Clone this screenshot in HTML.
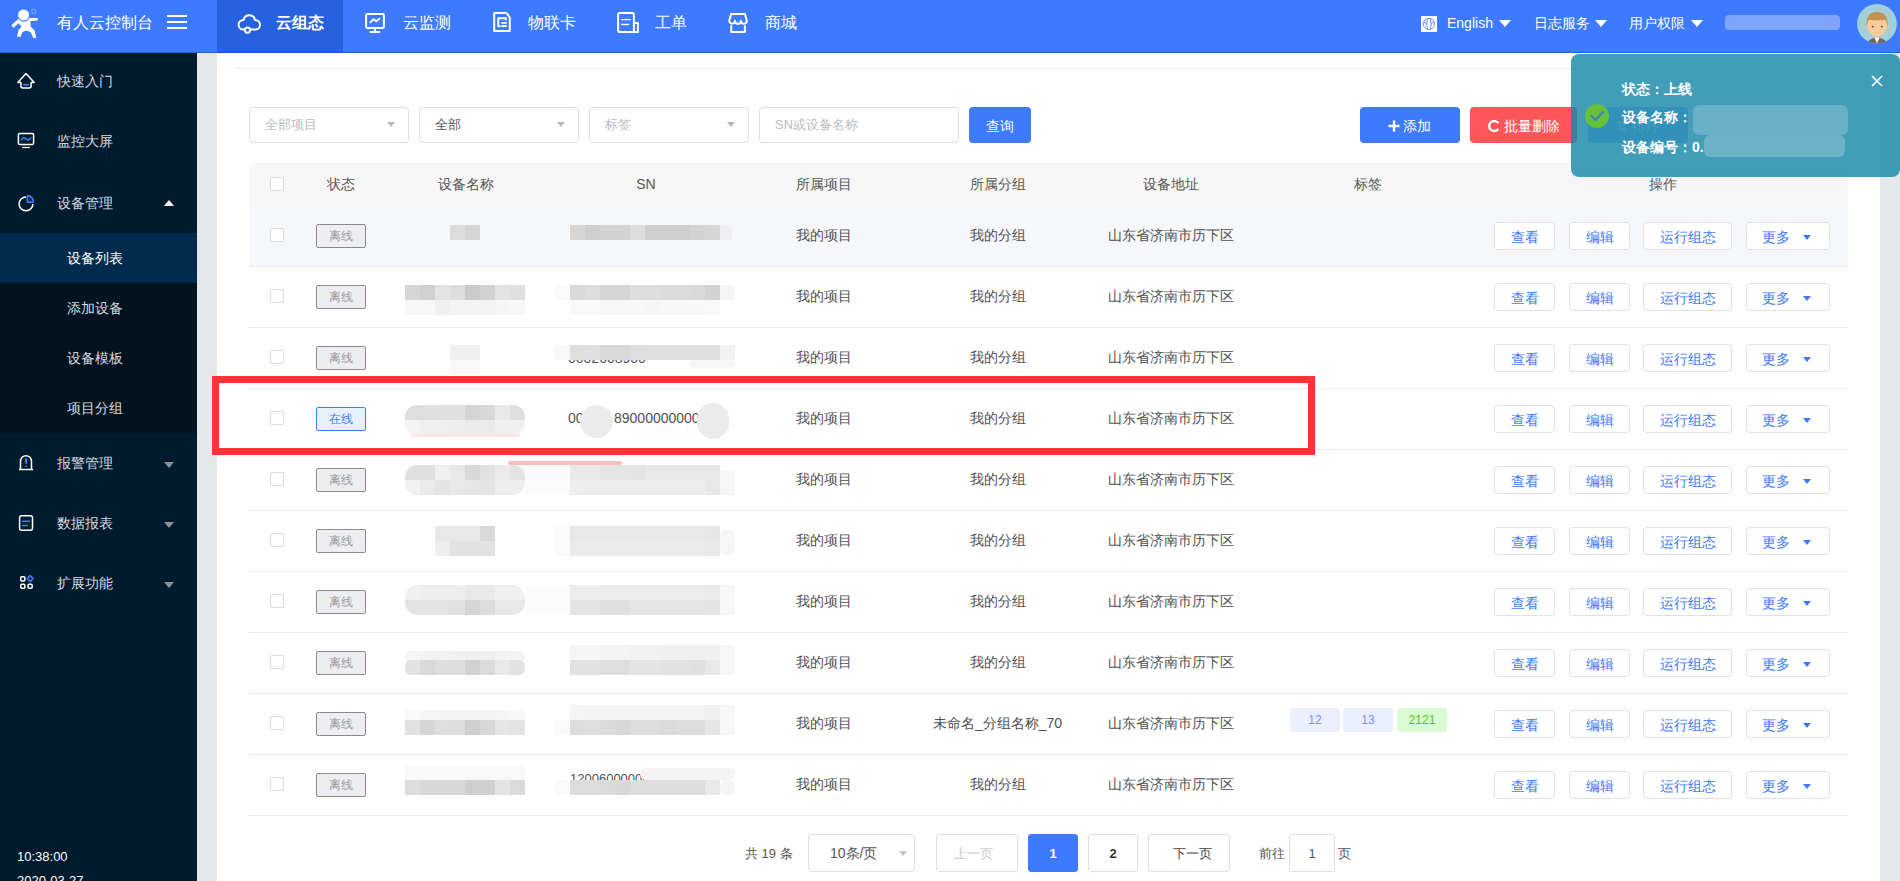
<!DOCTYPE html><html><head><meta charset="utf-8"><style>*{box-sizing:border-box;margin:0;padding:0}
html,body{width:1900px;height:881px;overflow:hidden;background:#fff;font-family:"Liberation Sans",sans-serif;color:#333}
.a{position:absolute}
#main{left:217px;top:52px;width:1663px;height:829px;background:#fff}
#hdr{left:0;top:0;width:1900px;height:52px;background:#3d7afd}
#side{left:0;top:53px;width:197px;height:828px;background:#001a2e}
#strip{left:197px;top:53px;width:20px;height:828px;background:#e6e7ea}
#rstrip{left:1880px;top:52px;width:20px;height:829px;background:#e6e7ea}
.nt{color:#fff;font-size:16px;line-height:20px;white-space:nowrap}
.rt{color:#fff;font-size:14px;line-height:18px;white-space:nowrap}
.si{color:#d5dae0;font-size:14px;line-height:18px;white-space:nowrap}
.th{font-size:14px;color:#555;line-height:18px;white-space:nowrap;text-align:center}
.td{font-size:14px;color:#505050;line-height:18px;white-space:nowrap;text-align:center}
.sel{border:1px solid #dcdfe6;border-radius:4px;height:36px;background:#fff}
.sel span{position:absolute;left:15px;top:8px;font-size:13px;line-height:17px;white-space:nowrap}
.caret{position:absolute;width:0;height:0;border-left:4px solid transparent;border-right:4px solid transparent;border-top:5px solid #b0b3b8}
.btn{border-radius:4px;color:#fff;font-size:14px;line-height:38px;text-align:center;height:36px;font-weight:500;white-space:nowrap}
.cb{width:14px;height:14px;border:1px solid #d8dbe0;border-radius:2px;background:#fff}
.st{width:50px;height:24px;border:1px solid #8a8a8a;background:#eceef2;color:#999;font-size:12px;line-height:23px;text-align:center;border-radius:2px}
.ob{height:28px;border:1px solid #e0e1e5;border-radius:4px;background:#fff;color:#3d7afd;font-size:14px;line-height:28px;text-align:center;white-space:nowrap}
.pg{top:834px;height:38px;border:1px solid #dcdfe6;border-radius:3px;background:#fff;font-size:13px;line-height:37px;text-align:center;white-space:nowrap}
</style></head><body>
<div class="a" id="main"></div>
<div id="strip" class="a"></div><div id="rstrip" class="a"></div>
<div class="a" style="left:237px;top:68px;width:1643px;height:1px;background:#e9ebef"></div>
<div class="a sel" style="left:249px;top:107px;width:160px"><span style="color:#b9bcc2">全部项目</span><i class="caret" style="left:137px;top:14px;border-top-color:#b4b8c0"></i></div>
<div class="a sel" style="left:419px;top:107px;width:160px"><span style="color:#555">全部</span><i class="caret" style="left:137px;top:14px;border-top-color:#b4b8c0"></i></div>
<div class="a sel" style="left:589px;top:107px;width:160px"><span style="color:#b9bcc2">标签</span><i class="caret" style="left:137px;top:14px;border-top-color:#b4b8c0"></i></div>
<div class="a sel" style="left:759px;top:107px;width:200px"><span style="color:#b9bcc2">SN或设备名称</span></div>
<div class="a btn" style="left:969px;top:107px;width:62px;background:#3d7afd">查询</div>
<div class="a btn" style="left:1360px;top:107px;width:100px;background:#3d7afd;padding-left:14px"><svg style="position:absolute;left:28px;top:13px" width="12" height="12" viewBox="0 0 12 12"><path d="M6 0.5V11.5M0.5 6H11.5" stroke="#fff" stroke-width="2.4"/></svg>添加</div>
<div class="a btn" style="left:1470px;top:107px;width:107px;background:#fe5558;padding-left:16px"><svg style="position:absolute;left:18px;top:13px" width="12" height="12" viewBox="0 0 12 12"><path d="M10.3 3.2 A5 5 0 1 0 10.3 8.8" fill="none" stroke="#fff" stroke-width="2.3"/></svg>批量删除</div>
<div class="a btn" style="left:1588px;top:107px;width:100px;background:#a4beff">⇅ 排序</div>
<div class="a" style="left:249px;top:163px;width:1599px;height:43px;background:#f6f6f6;border-radius:6px 6px 0 0"></div>
<div class="a cb" style="left:270px;top:177px"></div>
<div class="a th" style="left:305px;top:175px;width:72px">状态</div>
<div class="a th" style="left:377px;top:175px;width:178px">设备名称</div>
<div class="a th" style="left:555px;top:175px;width:182px">SN</div>
<div class="a th" style="left:737px;top:175px;width:174px">所属项目</div>
<div class="a th" style="left:911px;top:175px;width:173px">所属分组</div>
<div class="a th" style="left:1084px;top:175px;width:174px">设备地址</div>
<div class="a th" style="left:1258px;top:175px;width:220px">标签</div>
<div class="a th" style="left:1478px;top:175px;width:370px">操作</div>
<div class="a" style="left:249px;top:206px;width:1599px;height:60px;background:#f5f7fa"></div>
<div class="a" style="left:249px;top:266px;width:1599px;height:1px;background:#e8eaf0"></div>
<div class="a cb" style="left:270px;top:228px"></div>
<div class="a st" style="left:316px;top:224px">离线</div>
<div class="a td" style="left:737px;top:226px;width:174px">我的项目</div>
<div class="a td" style="left:911px;top:226px;width:173px">我的分组</div>
<div class="a td" style="left:1084px;top:226px;width:174px">山东省济南市历下区</div>
<div class="a ob" style="left:1494px;top:222px;width:61px">查看</div>
<div class="a ob" style="left:1569px;top:222px;width:61px">编辑</div>
<div class="a ob" style="left:1643px;top:222px;width:89px">运行组态</div>
<div class="a ob" style="left:1746px;top:222px;width:84px;text-align:left;padding-left:15px">更多<i class="caret" style="left:56px;top:12px;border-top-color:#3d7afd;border-left-width:4.2px;border-right-width:4.2px;border-top-width:5px"></i></div>
<div class="a" style="left:249px;top:267px;width:1599px;height:60px;background:#fff"></div>
<div class="a" style="left:249px;top:327px;width:1599px;height:1px;background:#e8eaf0"></div>
<div class="a cb" style="left:270px;top:289px"></div>
<div class="a st" style="left:316px;top:285px">离线</div>
<div class="a td" style="left:737px;top:287px;width:174px">我的项目</div>
<div class="a td" style="left:911px;top:287px;width:173px">我的分组</div>
<div class="a td" style="left:1084px;top:287px;width:174px">山东省济南市历下区</div>
<div class="a ob" style="left:1494px;top:283px;width:61px">查看</div>
<div class="a ob" style="left:1569px;top:283px;width:61px">编辑</div>
<div class="a ob" style="left:1643px;top:283px;width:89px">运行组态</div>
<div class="a ob" style="left:1746px;top:283px;width:84px;text-align:left;padding-left:15px">更多<i class="caret" style="left:56px;top:12px;border-top-color:#3d7afd;border-left-width:4.2px;border-right-width:4.2px;border-top-width:5px"></i></div>
<div class="a" style="left:249px;top:328px;width:1599px;height:60px;background:#fff"></div>
<div class="a" style="left:249px;top:388px;width:1599px;height:1px;background:#e8eaf0"></div>
<div class="a cb" style="left:270px;top:350px"></div>
<div class="a st" style="left:316px;top:346px">离线</div>
<div class="a td" style="left:737px;top:348px;width:174px">我的项目</div>
<div class="a td" style="left:911px;top:348px;width:173px">我的分组</div>
<div class="a td" style="left:1084px;top:348px;width:174px">山东省济南市历下区</div>
<div class="a ob" style="left:1494px;top:344px;width:61px">查看</div>
<div class="a ob" style="left:1569px;top:344px;width:61px">编辑</div>
<div class="a ob" style="left:1643px;top:344px;width:89px">运行组态</div>
<div class="a ob" style="left:1746px;top:344px;width:84px;text-align:left;padding-left:15px">更多<i class="caret" style="left:56px;top:12px;border-top-color:#3d7afd;border-left-width:4.2px;border-right-width:4.2px;border-top-width:5px"></i></div>
<div class="a" style="left:249px;top:389px;width:1599px;height:60px;background:#fff"></div>
<div class="a" style="left:249px;top:449px;width:1599px;height:1px;background:#e8eaf0"></div>
<div class="a cb" style="left:270px;top:411px"></div>
<div class="a st" style="left:316px;top:407px;border-color:#3d7afd;background:#e8f0fe;color:#3d7afd">在线</div>
<div class="a td" style="left:737px;top:409px;width:174px">我的项目</div>
<div class="a td" style="left:911px;top:409px;width:173px">我的分组</div>
<div class="a td" style="left:1084px;top:409px;width:174px">山东省济南市历下区</div>
<div class="a ob" style="left:1494px;top:405px;width:61px">查看</div>
<div class="a ob" style="left:1569px;top:405px;width:61px">编辑</div>
<div class="a ob" style="left:1643px;top:405px;width:89px">运行组态</div>
<div class="a ob" style="left:1746px;top:405px;width:84px;text-align:left;padding-left:15px">更多<i class="caret" style="left:56px;top:12px;border-top-color:#3d7afd;border-left-width:4.2px;border-right-width:4.2px;border-top-width:5px"></i></div>
<div class="a" style="left:249px;top:450px;width:1599px;height:60px;background:#fff"></div>
<div class="a" style="left:249px;top:510px;width:1599px;height:1px;background:#e8eaf0"></div>
<div class="a cb" style="left:270px;top:472px"></div>
<div class="a st" style="left:316px;top:468px">离线</div>
<div class="a td" style="left:737px;top:470px;width:174px">我的项目</div>
<div class="a td" style="left:911px;top:470px;width:173px">我的分组</div>
<div class="a td" style="left:1084px;top:470px;width:174px">山东省济南市历下区</div>
<div class="a ob" style="left:1494px;top:466px;width:61px">查看</div>
<div class="a ob" style="left:1569px;top:466px;width:61px">编辑</div>
<div class="a ob" style="left:1643px;top:466px;width:89px">运行组态</div>
<div class="a ob" style="left:1746px;top:466px;width:84px;text-align:left;padding-left:15px">更多<i class="caret" style="left:56px;top:12px;border-top-color:#3d7afd;border-left-width:4.2px;border-right-width:4.2px;border-top-width:5px"></i></div>
<div class="a" style="left:249px;top:511px;width:1599px;height:60px;background:#fff"></div>
<div class="a" style="left:249px;top:571px;width:1599px;height:1px;background:#e8eaf0"></div>
<div class="a cb" style="left:270px;top:533px"></div>
<div class="a st" style="left:316px;top:529px">离线</div>
<div class="a td" style="left:737px;top:531px;width:174px">我的项目</div>
<div class="a td" style="left:911px;top:531px;width:173px">我的分组</div>
<div class="a td" style="left:1084px;top:531px;width:174px">山东省济南市历下区</div>
<div class="a ob" style="left:1494px;top:527px;width:61px">查看</div>
<div class="a ob" style="left:1569px;top:527px;width:61px">编辑</div>
<div class="a ob" style="left:1643px;top:527px;width:89px">运行组态</div>
<div class="a ob" style="left:1746px;top:527px;width:84px;text-align:left;padding-left:15px">更多<i class="caret" style="left:56px;top:12px;border-top-color:#3d7afd;border-left-width:4.2px;border-right-width:4.2px;border-top-width:5px"></i></div>
<div class="a" style="left:249px;top:572px;width:1599px;height:60px;background:#fff"></div>
<div class="a" style="left:249px;top:632px;width:1599px;height:1px;background:#e8eaf0"></div>
<div class="a cb" style="left:270px;top:594px"></div>
<div class="a st" style="left:316px;top:590px">离线</div>
<div class="a td" style="left:737px;top:592px;width:174px">我的项目</div>
<div class="a td" style="left:911px;top:592px;width:173px">我的分组</div>
<div class="a td" style="left:1084px;top:592px;width:174px">山东省济南市历下区</div>
<div class="a ob" style="left:1494px;top:588px;width:61px">查看</div>
<div class="a ob" style="left:1569px;top:588px;width:61px">编辑</div>
<div class="a ob" style="left:1643px;top:588px;width:89px">运行组态</div>
<div class="a ob" style="left:1746px;top:588px;width:84px;text-align:left;padding-left:15px">更多<i class="caret" style="left:56px;top:12px;border-top-color:#3d7afd;border-left-width:4.2px;border-right-width:4.2px;border-top-width:5px"></i></div>
<div class="a" style="left:249px;top:633px;width:1599px;height:60px;background:#fff"></div>
<div class="a" style="left:249px;top:693px;width:1599px;height:1px;background:#e8eaf0"></div>
<div class="a cb" style="left:270px;top:655px"></div>
<div class="a st" style="left:316px;top:651px">离线</div>
<div class="a td" style="left:737px;top:653px;width:174px">我的项目</div>
<div class="a td" style="left:911px;top:653px;width:173px">我的分组</div>
<div class="a td" style="left:1084px;top:653px;width:174px">山东省济南市历下区</div>
<div class="a ob" style="left:1494px;top:649px;width:61px">查看</div>
<div class="a ob" style="left:1569px;top:649px;width:61px">编辑</div>
<div class="a ob" style="left:1643px;top:649px;width:89px">运行组态</div>
<div class="a ob" style="left:1746px;top:649px;width:84px;text-align:left;padding-left:15px">更多<i class="caret" style="left:56px;top:12px;border-top-color:#3d7afd;border-left-width:4.2px;border-right-width:4.2px;border-top-width:5px"></i></div>
<div class="a" style="left:249px;top:694px;width:1599px;height:60px;background:#fff"></div>
<div class="a" style="left:249px;top:754px;width:1599px;height:1px;background:#e8eaf0"></div>
<div class="a cb" style="left:270px;top:716px"></div>
<div class="a st" style="left:316px;top:712px">离线</div>
<div class="a td" style="left:737px;top:714px;width:174px">我的项目</div>
<div class="a td" style="left:911px;top:714px;width:173px">未命名_分组名称_70</div>
<div class="a td" style="left:1084px;top:714px;width:174px">山东省济南市历下区</div>
<div class="a ob" style="left:1494px;top:710px;width:61px">查看</div>
<div class="a ob" style="left:1569px;top:710px;width:61px">编辑</div>
<div class="a ob" style="left:1643px;top:710px;width:89px">运行组态</div>
<div class="a ob" style="left:1746px;top:710px;width:84px;text-align:left;padding-left:15px">更多<i class="caret" style="left:56px;top:12px;border-top-color:#3d7afd;border-left-width:4.2px;border-right-width:4.2px;border-top-width:5px"></i></div>
<div class="a" style="left:249px;top:755px;width:1599px;height:60px;background:#fff"></div>
<div class="a" style="left:249px;top:815px;width:1599px;height:1px;background:#e8eaf0"></div>
<div class="a cb" style="left:270px;top:777px"></div>
<div class="a st" style="left:316px;top:773px">离线</div>
<div class="a td" style="left:737px;top:775px;width:174px">我的项目</div>
<div class="a td" style="left:911px;top:775px;width:173px">我的分组</div>
<div class="a td" style="left:1084px;top:775px;width:174px">山东省济南市历下区</div>
<div class="a ob" style="left:1494px;top:771px;width:61px">查看</div>
<div class="a ob" style="left:1569px;top:771px;width:61px">编辑</div>
<div class="a ob" style="left:1643px;top:771px;width:89px">运行组态</div>
<div class="a ob" style="left:1746px;top:771px;width:84px;text-align:left;padding-left:15px">更多<i class="caret" style="left:56px;top:12px;border-top-color:#3d7afd;border-left-width:4.2px;border-right-width:4.2px;border-top-width:5px"></i></div>
<div class="a" style="left:1290px;top:708px;width:50px;height:24px;border-radius:3px;background:#ecf0fe;color:#7b8cf5;font-size:12px;line-height:24px;text-align:center">12</div>
<div class="a" style="left:1343px;top:708px;width:50px;height:24px;border-radius:3px;background:#ecf0fe;color:#7b8cf5;font-size:12px;line-height:24px;text-align:center">13</div>
<div class="a" style="left:1397px;top:708px;width:50px;height:24px;border-radius:3px;background:#d9fcd2;color:#52c41a;font-size:12px;line-height:24px;text-align:center">2121</div>
<div class="a" style="left:450px;top:225px;width:30px;height:15px;overflow:hidden;border-radius:0px;"><i class="a" style="left:0px;top:0px;width:15px;height:15px;background:#dcdcdc"></i><i class="a" style="left:15px;top:0px;width:15px;height:15px;background:#d5d5d5"></i></div>
<div class="a" style="left:570px;top:225px;width:150px;height:15px;overflow:hidden;border-radius:0px;"><i class="a" style="left:0px;top:0px;width:15px;height:15px;background:#d5d5d5"></i><i class="a" style="left:15px;top:0px;width:15px;height:15px;background:#cecece"></i><i class="a" style="left:30px;top:0px;width:15px;height:15px;background:#d3d3d3"></i><i class="a" style="left:45px;top:0px;width:15px;height:15px;background:#d3d3d3"></i><i class="a" style="left:60px;top:0px;width:15px;height:15px;background:#dcdcdc"></i><i class="a" style="left:75px;top:0px;width:15px;height:15px;background:#cecece"></i><i class="a" style="left:90px;top:0px;width:15px;height:15px;background:#cecece"></i><i class="a" style="left:105px;top:0px;width:15px;height:15px;background:#cecece"></i><i class="a" style="left:120px;top:0px;width:15px;height:15px;background:#d3d3d3"></i><i class="a" style="left:135px;top:0px;width:15px;height:15px;background:#d6d6d6"></i></div>
<div class="a" style="left:720px;top:225px;width:12px;height:15px;background:#efeff2;border-radius:4px"></div>
<div class="a" style="left:405px;top:285px;width:120px;height:30px;overflow:hidden;border-radius:0px;"><i class="a" style="left:0px;top:0px;width:15px;height:15px;background:#d6d6d6"></i><i class="a" style="left:15px;top:0px;width:15px;height:15px;background:#d0d0d0"></i><i class="a" style="left:30px;top:0px;width:15px;height:15px;background:#e3e3e3"></i><i class="a" style="left:45px;top:0px;width:15px;height:15px;background:#dddddd"></i><i class="a" style="left:60px;top:0px;width:15px;height:15px;background:#cbcbcb"></i><i class="a" style="left:75px;top:0px;width:15px;height:15px;background:#d2d2d2"></i><i class="a" style="left:90px;top:0px;width:15px;height:15px;background:#e3e3e3"></i><i class="a" style="left:105px;top:0px;width:15px;height:15px;background:#dfdfdf"></i><i class="a" style="left:0px;top:15px;width:15px;height:15px;background:#f7f7f7"></i><i class="a" style="left:15px;top:15px;width:15px;height:15px;background:#f7f7f7"></i><i class="a" style="left:30px;top:15px;width:15px;height:15px;background:#f0f0f0"></i><i class="a" style="left:45px;top:15px;width:15px;height:15px;background:#f3f3f3"></i><i class="a" style="left:60px;top:15px;width:15px;height:15px;background:#f3f3f3"></i><i class="a" style="left:75px;top:15px;width:15px;height:15px;background:#f3f3f3"></i><i class="a" style="left:90px;top:15px;width:15px;height:15px;background:#f5f5f5"></i><i class="a" style="left:105px;top:15px;width:15px;height:15px;background:#f7f7f7"></i></div>
<div class="a" style="left:570px;top:285px;width:150px;height:30px;overflow:hidden;border-radius:0px;"><i class="a" style="left:0px;top:0px;width:15px;height:15px;background:#d9d9d9"></i><i class="a" style="left:15px;top:0px;width:15px;height:15px;background:#dddddd"></i><i class="a" style="left:30px;top:0px;width:15px;height:15px;background:#d5d5d5"></i><i class="a" style="left:45px;top:0px;width:15px;height:15px;background:#d5d5d5"></i><i class="a" style="left:60px;top:0px;width:15px;height:15px;background:#dddddd"></i><i class="a" style="left:75px;top:0px;width:15px;height:15px;background:#dddddd"></i><i class="a" style="left:90px;top:0px;width:15px;height:15px;background:#dbdbdb"></i><i class="a" style="left:105px;top:0px;width:15px;height:15px;background:#dbdbdb"></i><i class="a" style="left:120px;top:0px;width:15px;height:15px;background:#d9d9d9"></i><i class="a" style="left:135px;top:0px;width:15px;height:15px;background:#d3d3d3"></i><i class="a" style="left:0px;top:15px;width:15px;height:15px;background:#f8f8f8"></i><i class="a" style="left:15px;top:15px;width:15px;height:15px;background:#f8f8f8"></i><i class="a" style="left:30px;top:15px;width:15px;height:15px;background:#f7f7f7"></i><i class="a" style="left:45px;top:15px;width:15px;height:15px;background:#f7f7f7"></i><i class="a" style="left:60px;top:15px;width:15px;height:15px;background:#f7f7f7"></i><i class="a" style="left:75px;top:15px;width:15px;height:15px;background:#f5f5f5"></i><i class="a" style="left:90px;top:15px;width:15px;height:15px;background:#f7f7f7"></i><i class="a" style="left:105px;top:15px;width:15px;height:15px;background:#f7f7f7"></i><i class="a" style="left:120px;top:15px;width:15px;height:15px;background:#f7f7f7"></i><i class="a" style="left:135px;top:15px;width:15px;height:15px;background:#f8f8f8"></i></div>
<div class="a" style="left:720px;top:285px;width:15px;height:15px;background:#f5f5f5;border-radius:0px"></div>
<div class="a" style="left:555px;top:285px;width:15px;height:15px;background:#fafafa;border-radius:0px"></div>
<div class="a td" style="left:568px;top:349px;font-size:14px;color:#555;text-align:left">0002608900</div>
<div class="a" style="left:450px;top:345px;width:30px;height:30px;overflow:hidden;border-radius:0px;"><i class="a" style="left:0px;top:0px;width:15px;height:15px;background:#f0f0f0"></i><i class="a" style="left:15px;top:0px;width:15px;height:15px;background:#f0f0f0"></i><i class="a" style="left:0px;top:15px;width:15px;height:15px;background:#f8f8f8"></i><i class="a" style="left:15px;top:15px;width:15px;height:15px;background:#f8f8f8"></i></div>
<div class="a" style="left:570px;top:345px;width:150px;height:15px;overflow:hidden;border-radius:0px;"><i class="a" style="left:0px;top:0px;width:15px;height:15px;background:#dedede"></i><i class="a" style="left:15px;top:0px;width:15px;height:15px;background:#dfdfdf"></i><i class="a" style="left:30px;top:0px;width:15px;height:15px;background:#d9d9d9"></i><i class="a" style="left:45px;top:0px;width:15px;height:15px;background:#d9d9d9"></i><i class="a" style="left:60px;top:0px;width:15px;height:15px;background:#dedede"></i><i class="a" style="left:75px;top:0px;width:15px;height:15px;background:#dfdfdf"></i><i class="a" style="left:90px;top:0px;width:15px;height:15px;background:#dfdfdf"></i><i class="a" style="left:105px;top:0px;width:15px;height:15px;background:#dfdfdf"></i><i class="a" style="left:120px;top:0px;width:15px;height:15px;background:#dfdfdf"></i><i class="a" style="left:135px;top:0px;width:15px;height:15px;background:#dfdfdf"></i></div>
<div class="a" style="left:720px;top:345px;width:15px;height:15px;background:#f2f2f2;border-radius:0px"></div>
<div class="a" style="left:555px;top:345px;width:15px;height:15px;background:#f8f8f8;border-radius:0px"></div>
<div class="a" style="left:690px;top:360px;width:45px;height:8px;background:#f6f6f6;border-radius:4px"></div>
<div class="a" style="left:405px;top:405px;width:120px;height:30px;overflow:hidden;border-radius:12px;"><i class="a" style="left:0px;top:0px;width:15px;height:15px;background:#dedede"></i><i class="a" style="left:15px;top:0px;width:15px;height:15px;background:#dfdfdf"></i><i class="a" style="left:30px;top:0px;width:15px;height:15px;background:#e0e0e0"></i><i class="a" style="left:45px;top:0px;width:15px;height:15px;background:#e0e0e0"></i><i class="a" style="left:60px;top:0px;width:15px;height:15px;background:#d5d5d5"></i><i class="a" style="left:75px;top:0px;width:15px;height:15px;background:#d8d8d8"></i><i class="a" style="left:90px;top:0px;width:15px;height:15px;background:#e8e8e8"></i><i class="a" style="left:105px;top:0px;width:15px;height:15px;background:#dfdfdf"></i><i class="a" style="left:0px;top:15px;width:15px;height:15px;background:#f3f3f3"></i><i class="a" style="left:15px;top:15px;width:15px;height:15px;background:#efefef"></i><i class="a" style="left:30px;top:15px;width:15px;height:15px;background:#efefef"></i><i class="a" style="left:45px;top:15px;width:15px;height:15px;background:#eeeeee"></i><i class="a" style="left:60px;top:15px;width:15px;height:15px;background:#ebebeb"></i><i class="a" style="left:75px;top:15px;width:15px;height:15px;background:#eaeaea"></i><i class="a" style="left:90px;top:15px;width:15px;height:15px;background:#efefef"></i><i class="a" style="left:105px;top:15px;width:15px;height:15px;background:#f0f0f0"></i></div>
<div class="a" style="left:410px;top:434px;width:110px;height:3px;background:#fde5e6;border-radius:2px"></div>
<div class="a td" style="left:568px;top:409px;text-align:left">00</div>
<div class="a td" style="left:614px;top:409px;text-align:left">89000000000</div>
<div class="a" style="left:580px;top:405px;width:33px;height:33px;background:#ebebeb;border-radius:17px"></div>
<div class="a" style="left:697px;top:403px;width:32px;height:36px;background:#ebebeb;border-radius:16px"></div>
<div class="a" style="left:508px;top:461px;width:114px;height:4px;background:#fdbcbe;border-radius:4px"></div>
<div class="a" style="left:405px;top:465px;width:120px;height:30px;overflow:hidden;border-radius:12px;"><i class="a" style="left:0px;top:0px;width:15px;height:15px;background:#e0e0e0"></i><i class="a" style="left:15px;top:0px;width:15px;height:15px;background:#e0e0e0"></i><i class="a" style="left:30px;top:0px;width:15px;height:15px;background:#efefef"></i><i class="a" style="left:45px;top:0px;width:15px;height:15px;background:#e8e8e8"></i><i class="a" style="left:60px;top:0px;width:15px;height:15px;background:#d8d8d8"></i><i class="a" style="left:75px;top:0px;width:15px;height:15px;background:#e2e2e2"></i><i class="a" style="left:90px;top:0px;width:15px;height:15px;background:#eaeaea"></i><i class="a" style="left:105px;top:0px;width:15px;height:15px;background:#e3e3e3"></i><i class="a" style="left:0px;top:15px;width:15px;height:15px;background:#f2f2f2"></i><i class="a" style="left:15px;top:15px;width:15px;height:15px;background:#eaeaea"></i><i class="a" style="left:30px;top:15px;width:15px;height:15px;background:#e4e4e4"></i><i class="a" style="left:45px;top:15px;width:15px;height:15px;background:#e8e8e8"></i><i class="a" style="left:60px;top:15px;width:15px;height:15px;background:#e6e6e6"></i><i class="a" style="left:75px;top:15px;width:15px;height:15px;background:#e4e4e4"></i><i class="a" style="left:90px;top:15px;width:15px;height:15px;background:#eeeeee"></i><i class="a" style="left:105px;top:15px;width:15px;height:15px;background:#eeeeee"></i></div>
<div class="a" style="left:570px;top:465px;width:150px;height:30px;overflow:hidden;border-radius:0px;"><i class="a" style="left:0px;top:0px;width:15px;height:15px;background:#e9e9e9"></i><i class="a" style="left:15px;top:0px;width:15px;height:15px;background:#e9e9e9"></i><i class="a" style="left:30px;top:0px;width:15px;height:15px;background:#e5e5e5"></i><i class="a" style="left:45px;top:0px;width:15px;height:15px;background:#e5e5e5"></i><i class="a" style="left:60px;top:0px;width:15px;height:15px;background:#e4e4e4"></i><i class="a" style="left:75px;top:0px;width:15px;height:15px;background:#e8e8e8"></i><i class="a" style="left:90px;top:0px;width:15px;height:15px;background:#e8e8e8"></i><i class="a" style="left:105px;top:0px;width:15px;height:15px;background:#e8e8e8"></i><i class="a" style="left:120px;top:0px;width:15px;height:15px;background:#e8e8e8"></i><i class="a" style="left:135px;top:0px;width:15px;height:15px;background:#e8e8e8"></i><i class="a" style="left:0px;top:15px;width:15px;height:15px;background:#eeeeee"></i><i class="a" style="left:15px;top:15px;width:15px;height:15px;background:#ececec"></i><i class="a" style="left:30px;top:15px;width:15px;height:15px;background:#ececec"></i><i class="a" style="left:45px;top:15px;width:15px;height:15px;background:#ececec"></i><i class="a" style="left:60px;top:15px;width:15px;height:15px;background:#ececec"></i><i class="a" style="left:75px;top:15px;width:15px;height:15px;background:#ececec"></i><i class="a" style="left:90px;top:15px;width:15px;height:15px;background:#ececec"></i><i class="a" style="left:105px;top:15px;width:15px;height:15px;background:#ececec"></i><i class="a" style="left:120px;top:15px;width:15px;height:15px;background:#ececec"></i><i class="a" style="left:135px;top:15px;width:15px;height:15px;background:#e8e8e8"></i></div>
<div class="a" style="left:720px;top:470px;width:15px;height:25px;background:#f6f6f6;border-radius:0px"></div>
<div class="a" style="left:525px;top:465px;width:45px;height:30px;background:#fbfbfb;border-radius:0px"></div>
<div class="a" style="left:435px;top:526px;width:60px;height:30px;overflow:hidden;border-radius:0px;"><i class="a" style="left:0px;top:0px;width:15px;height:15px;background:#e8e8e8"></i><i class="a" style="left:15px;top:0px;width:15px;height:15px;background:#e8e8e8"></i><i class="a" style="left:30px;top:0px;width:15px;height:15px;background:#e8e8e8"></i><i class="a" style="left:45px;top:0px;width:15px;height:15px;background:#d9d9d9"></i><i class="a" style="left:0px;top:15px;width:15px;height:15px;background:#eeeeee"></i><i class="a" style="left:15px;top:15px;width:15px;height:15px;background:#e2e2e2"></i><i class="a" style="left:30px;top:15px;width:15px;height:15px;background:#e2e2e2"></i><i class="a" style="left:45px;top:15px;width:15px;height:15px;background:#e2e2e2"></i></div>
<div class="a" style="left:570px;top:526px;width:150px;height:30px;overflow:hidden;border-radius:0px;"><i class="a" style="left:0px;top:0px;width:15px;height:15px;background:#e8e8e8"></i><i class="a" style="left:15px;top:0px;width:15px;height:15px;background:#e8e8e8"></i><i class="a" style="left:30px;top:0px;width:15px;height:15px;background:#e8e8e8"></i><i class="a" style="left:45px;top:0px;width:15px;height:15px;background:#e8e8e8"></i><i class="a" style="left:60px;top:0px;width:15px;height:15px;background:#e8e8e8"></i><i class="a" style="left:75px;top:0px;width:15px;height:15px;background:#e8e8e8"></i><i class="a" style="left:90px;top:0px;width:15px;height:15px;background:#e8e8e8"></i><i class="a" style="left:105px;top:0px;width:15px;height:15px;background:#e8e8e8"></i><i class="a" style="left:120px;top:0px;width:15px;height:15px;background:#e8e8e8"></i><i class="a" style="left:135px;top:0px;width:15px;height:15px;background:#e6e6e6"></i><i class="a" style="left:0px;top:15px;width:15px;height:15px;background:#eaeaea"></i><i class="a" style="left:15px;top:15px;width:15px;height:15px;background:#eaeaea"></i><i class="a" style="left:30px;top:15px;width:15px;height:15px;background:#eaeaea"></i><i class="a" style="left:45px;top:15px;width:15px;height:15px;background:#eaeaea"></i><i class="a" style="left:60px;top:15px;width:15px;height:15px;background:#eaeaea"></i><i class="a" style="left:75px;top:15px;width:15px;height:15px;background:#eaeaea"></i><i class="a" style="left:90px;top:15px;width:15px;height:15px;background:#eaeaea"></i><i class="a" style="left:105px;top:15px;width:15px;height:15px;background:#eaeaea"></i><i class="a" style="left:120px;top:15px;width:15px;height:15px;background:#eaeaea"></i><i class="a" style="left:135px;top:15px;width:15px;height:15px;background:#e8e8e8"></i></div>
<div class="a" style="left:720px;top:530px;width:15px;height:25px;background:#f6f6f6;border-radius:6px"></div>
<div class="a" style="left:555px;top:526px;width:15px;height:30px;background:#fafafa;border-radius:0px"></div>
<div class="a" style="left:405px;top:585px;width:120px;height:30px;overflow:hidden;border-radius:13px;"><i class="a" style="left:0px;top:0px;width:15px;height:15px;background:#f0f0f0"></i><i class="a" style="left:15px;top:0px;width:15px;height:15px;background:#eeeeee"></i><i class="a" style="left:30px;top:0px;width:15px;height:15px;background:#eeeeee"></i><i class="a" style="left:45px;top:0px;width:15px;height:15px;background:#ededed"></i><i class="a" style="left:60px;top:0px;width:15px;height:15px;background:#e9e9e9"></i><i class="a" style="left:75px;top:0px;width:15px;height:15px;background:#e9e9e9"></i><i class="a" style="left:90px;top:0px;width:15px;height:15px;background:#efefef"></i><i class="a" style="left:105px;top:0px;width:15px;height:15px;background:#f0f0f0"></i><i class="a" style="left:0px;top:15px;width:15px;height:15px;background:#e3e3e3"></i><i class="a" style="left:15px;top:15px;width:15px;height:15px;background:#e3e3e3"></i><i class="a" style="left:30px;top:15px;width:15px;height:15px;background:#e3e3e3"></i><i class="a" style="left:45px;top:15px;width:15px;height:15px;background:#e2e2e2"></i><i class="a" style="left:60px;top:15px;width:15px;height:15px;background:#d5d5d5"></i><i class="a" style="left:75px;top:15px;width:15px;height:15px;background:#dcdcdc"></i><i class="a" style="left:90px;top:15px;width:15px;height:15px;background:#e8e8e8"></i><i class="a" style="left:105px;top:15px;width:15px;height:15px;background:#e8e8e8"></i></div>
<div class="a" style="left:570px;top:585px;width:150px;height:30px;overflow:hidden;border-radius:0px;"><i class="a" style="left:0px;top:0px;width:15px;height:15px;background:#ededed"></i><i class="a" style="left:15px;top:0px;width:15px;height:15px;background:#ededed"></i><i class="a" style="left:30px;top:0px;width:15px;height:15px;background:#ececec"></i><i class="a" style="left:45px;top:0px;width:15px;height:15px;background:#ececec"></i><i class="a" style="left:60px;top:0px;width:15px;height:15px;background:#ececec"></i><i class="a" style="left:75px;top:0px;width:15px;height:15px;background:#ececec"></i><i class="a" style="left:90px;top:0px;width:15px;height:15px;background:#ececec"></i><i class="a" style="left:105px;top:0px;width:15px;height:15px;background:#ececec"></i><i class="a" style="left:120px;top:0px;width:15px;height:15px;background:#ececec"></i><i class="a" style="left:135px;top:0px;width:15px;height:15px;background:#eaeaea"></i><i class="a" style="left:0px;top:15px;width:15px;height:15px;background:#e4e4e4"></i><i class="a" style="left:15px;top:15px;width:15px;height:15px;background:#e4e4e4"></i><i class="a" style="left:30px;top:15px;width:15px;height:15px;background:#e0e0e0"></i><i class="a" style="left:45px;top:15px;width:15px;height:15px;background:#e0e0e0"></i><i class="a" style="left:60px;top:15px;width:15px;height:15px;background:#e6e6e6"></i><i class="a" style="left:75px;top:15px;width:15px;height:15px;background:#e6e6e6"></i><i class="a" style="left:90px;top:15px;width:15px;height:15px;background:#e6e6e6"></i><i class="a" style="left:105px;top:15px;width:15px;height:15px;background:#e6e6e6"></i><i class="a" style="left:120px;top:15px;width:15px;height:15px;background:#e6e6e6"></i><i class="a" style="left:135px;top:15px;width:15px;height:15px;background:#e4e4e4"></i></div>
<div class="a" style="left:720px;top:585px;width:15px;height:30px;background:#f7f7f7;border-radius:0px"></div>
<div class="a" style="left:525px;top:585px;width:45px;height:30px;background:#fbfbfb;border-radius:0px"></div>
<div class="a" style="left:405px;top:651px;width:120px;height:12px;overflow:hidden;border-radius:8px;"><i class="a" style="left:0px;top:0px;width:15px;height:12px;background:#f5f5f5"></i><i class="a" style="left:15px;top:0px;width:15px;height:12px;background:#f3f3f3"></i><i class="a" style="left:30px;top:0px;width:15px;height:12px;background:#f3f3f3"></i><i class="a" style="left:45px;top:0px;width:15px;height:12px;background:#f0f0f0"></i><i class="a" style="left:60px;top:0px;width:15px;height:12px;background:#efefef"></i><i class="a" style="left:75px;top:0px;width:15px;height:12px;background:#efefef"></i><i class="a" style="left:90px;top:0px;width:15px;height:12px;background:#f3f3f3"></i><i class="a" style="left:105px;top:0px;width:15px;height:12px;background:#f3f3f3"></i></div>
<div class="a" style="left:405px;top:660px;width:120px;height:15px;overflow:hidden;border-radius:6px;"><i class="a" style="left:0px;top:0px;width:15px;height:15px;background:#e2e2e2"></i><i class="a" style="left:15px;top:0px;width:15px;height:15px;background:#d9d9d9"></i><i class="a" style="left:30px;top:0px;width:15px;height:15px;background:#dddddd"></i><i class="a" style="left:45px;top:0px;width:15px;height:15px;background:#dddddd"></i><i class="a" style="left:60px;top:0px;width:15px;height:15px;background:#d2d2d2"></i><i class="a" style="left:75px;top:0px;width:15px;height:15px;background:#dadada"></i><i class="a" style="left:90px;top:0px;width:15px;height:15px;background:#e8e8e8"></i><i class="a" style="left:105px;top:0px;width:15px;height:15px;background:#e2e2e2"></i></div>
<div class="a" style="left:570px;top:645px;width:150px;height:30px;overflow:hidden;border-radius:0px;"><i class="a" style="left:0px;top:0px;width:15px;height:15px;background:#f5f5f5"></i><i class="a" style="left:15px;top:0px;width:15px;height:15px;background:#f5f5f5"></i><i class="a" style="left:30px;top:0px;width:15px;height:15px;background:#f3f3f3"></i><i class="a" style="left:45px;top:0px;width:15px;height:15px;background:#f3f3f3"></i><i class="a" style="left:60px;top:0px;width:15px;height:15px;background:#f1f1f1"></i><i class="a" style="left:75px;top:0px;width:15px;height:15px;background:#f1f1f1"></i><i class="a" style="left:90px;top:0px;width:15px;height:15px;background:#f0f0f0"></i><i class="a" style="left:105px;top:0px;width:15px;height:15px;background:#efefef"></i><i class="a" style="left:120px;top:0px;width:15px;height:15px;background:#efefef"></i><i class="a" style="left:135px;top:0px;width:15px;height:15px;background:#efefef"></i><i class="a" style="left:0px;top:15px;width:15px;height:15px;background:#e2e2e2"></i><i class="a" style="left:15px;top:15px;width:15px;height:15px;background:#e2e2e2"></i><i class="a" style="left:30px;top:15px;width:15px;height:15px;background:#dedede"></i><i class="a" style="left:45px;top:15px;width:15px;height:15px;background:#dedede"></i><i class="a" style="left:60px;top:15px;width:15px;height:15px;background:#e4e4e4"></i><i class="a" style="left:75px;top:15px;width:15px;height:15px;background:#e4e4e4"></i><i class="a" style="left:90px;top:15px;width:15px;height:15px;background:#e2e2e2"></i><i class="a" style="left:105px;top:15px;width:15px;height:15px;background:#e2e2e2"></i><i class="a" style="left:120px;top:15px;width:15px;height:15px;background:#e0e0e0"></i><i class="a" style="left:135px;top:15px;width:15px;height:15px;background:#e8e8e8"></i></div>
<div class="a" style="left:720px;top:645px;width:15px;height:30px;background:#f6f6f6;border-radius:0px"></div>
<div class="a" style="left:405px;top:710px;width:120px;height:10px;overflow:hidden;border-radius:0px;"><i class="a" style="left:0px;top:0px;width:15px;height:10px;background:#f9f9f9"></i><i class="a" style="left:15px;top:0px;width:15px;height:10px;background:#f5f5f5"></i><i class="a" style="left:30px;top:0px;width:15px;height:10px;background:#f4f4f4"></i><i class="a" style="left:45px;top:0px;width:15px;height:10px;background:#f4f4f4"></i><i class="a" style="left:60px;top:0px;width:15px;height:10px;background:#f3f3f3"></i><i class="a" style="left:75px;top:0px;width:15px;height:10px;background:#f3f3f3"></i><i class="a" style="left:90px;top:0px;width:15px;height:10px;background:#f5f5f5"></i><i class="a" style="left:105px;top:0px;width:15px;height:10px;background:#f7f7f7"></i></div>
<div class="a" style="left:405px;top:720px;width:120px;height:15px;overflow:hidden;border-radius:0px;"><i class="a" style="left:0px;top:0px;width:15px;height:15px;background:#e2e2e2"></i><i class="a" style="left:15px;top:0px;width:15px;height:15px;background:#d5d5d5"></i><i class="a" style="left:30px;top:0px;width:15px;height:15px;background:#dedede"></i><i class="a" style="left:45px;top:0px;width:15px;height:15px;background:#dddddd"></i><i class="a" style="left:60px;top:0px;width:15px;height:15px;background:#cfcfcf"></i><i class="a" style="left:75px;top:0px;width:15px;height:15px;background:#d7d7d7"></i><i class="a" style="left:90px;top:0px;width:15px;height:15px;background:#e6e6e6"></i><i class="a" style="left:105px;top:0px;width:15px;height:15px;background:#e4e4e4"></i></div>
<div class="a" style="left:570px;top:705px;width:150px;height:30px;overflow:hidden;border-radius:0px;"><i class="a" style="left:0px;top:0px;width:15px;height:15px;background:#f5f5f5"></i><i class="a" style="left:15px;top:0px;width:15px;height:15px;background:#f3f3f3"></i><i class="a" style="left:30px;top:0px;width:15px;height:15px;background:#f3f3f3"></i><i class="a" style="left:45px;top:0px;width:15px;height:15px;background:#f3f3f3"></i><i class="a" style="left:60px;top:0px;width:15px;height:15px;background:#f3f3f3"></i><i class="a" style="left:75px;top:0px;width:15px;height:15px;background:#f3f3f3"></i><i class="a" style="left:90px;top:0px;width:15px;height:15px;background:#f3f3f3"></i><i class="a" style="left:105px;top:0px;width:15px;height:15px;background:#f3f3f3"></i><i class="a" style="left:120px;top:0px;width:15px;height:15px;background:#f3f3f3"></i><i class="a" style="left:135px;top:0px;width:15px;height:15px;background:#f0f0f0"></i><i class="a" style="left:0px;top:15px;width:15px;height:15px;background:#dcdcdc"></i><i class="a" style="left:15px;top:15px;width:15px;height:15px;background:#dedede"></i><i class="a" style="left:30px;top:15px;width:15px;height:15px;background:#dadada"></i><i class="a" style="left:45px;top:15px;width:15px;height:15px;background:#d8d8d8"></i><i class="a" style="left:60px;top:15px;width:15px;height:15px;background:#dddddd"></i><i class="a" style="left:75px;top:15px;width:15px;height:15px;background:#dddddd"></i><i class="a" style="left:90px;top:15px;width:15px;height:15px;background:#dadada"></i><i class="a" style="left:105px;top:15px;width:15px;height:15px;background:#dcdcdc"></i><i class="a" style="left:120px;top:15px;width:15px;height:15px;background:#dcdcdc"></i><i class="a" style="left:135px;top:15px;width:15px;height:15px;background:#e6e6e6"></i></div>
<div class="a" style="left:720px;top:705px;width:15px;height:30px;background:#f7f7f7;border-radius:0px"></div>
<div class="a" style="left:555px;top:720px;width:15px;height:15px;background:#fafafa;border-radius:0px"></div>
<div class="a" style="left:405px;top:766px;width:120px;height:14px;background:#f8f8f8;border-radius:0px"></div>
<div class="a" style="left:405px;top:780px;width:120px;height:15px;overflow:hidden;border-radius:0px;"><i class="a" style="left:0px;top:0px;width:15px;height:15px;background:#dcdcdc"></i><i class="a" style="left:15px;top:0px;width:15px;height:15px;background:#d8d8d8"></i><i class="a" style="left:30px;top:0px;width:15px;height:15px;background:#d8d8d8"></i><i class="a" style="left:45px;top:0px;width:15px;height:15px;background:#d8d8d8"></i><i class="a" style="left:60px;top:0px;width:15px;height:15px;background:#cecece"></i><i class="a" style="left:75px;top:0px;width:15px;height:15px;background:#cfcfcf"></i><i class="a" style="left:90px;top:0px;width:15px;height:15px;background:#e3e3e3"></i><i class="a" style="left:105px;top:0px;width:15px;height:15px;background:#dadada"></i></div>
<div class="a td" style="left:570px;top:770px;text-align:left;font-size:13px;clip-path:inset(0 0 6px 0)">1200600000000</div>
<div class="a" style="left:640px;top:768px;width:95px;height:12px;background:#f4f4f4;border-radius:6px"></div>
<div class="a" style="left:570px;top:780px;width:150px;height:15px;overflow:hidden;border-radius:0px;"><i class="a" style="left:0px;top:0px;width:15px;height:15px;background:#dcdcdc"></i><i class="a" style="left:15px;top:0px;width:15px;height:15px;background:#dcdcdc"></i><i class="a" style="left:30px;top:0px;width:15px;height:15px;background:#dadada"></i><i class="a" style="left:45px;top:0px;width:15px;height:15px;background:#d8d8d8"></i><i class="a" style="left:60px;top:0px;width:15px;height:15px;background:#dddddd"></i><i class="a" style="left:75px;top:0px;width:15px;height:15px;background:#dddddd"></i><i class="a" style="left:90px;top:0px;width:15px;height:15px;background:#dddddd"></i><i class="a" style="left:105px;top:0px;width:15px;height:15px;background:#dddddd"></i><i class="a" style="left:120px;top:0px;width:15px;height:15px;background:#dddddd"></i><i class="a" style="left:135px;top:0px;width:15px;height:15px;background:#e8e8e8"></i></div>
<div class="a" style="left:720px;top:780px;width:15px;height:15px;background:#f5f5f5;border-radius:5px"></div>
<div class="a" style="left:555px;top:780px;width:15px;height:15px;background:#fafafa;border-radius:0px"></div>
<div class="a" style="left:212px;top:376px;width:1103px;height:79px;border:7px solid #fe3237"></div>
<div class="a" style="left:249px;top:815px;width:1599px;height:1px;background:#e8eaf0"></div>
<div class="a" style="left:745px;top:845px;font-size:13px;line-height:18px;color:#555;white-space:nowrap">共 19 条</div>
<div class="a sel" style="left:808px;top:834px;width:107px;height:38px"><span style="left:21px;top:10px;color:#555;font-size:14px">10条/页</span><i class="caret" style="left:90px;top:16px;border-top-color:#c0c4cc"></i></div>
<div class="a pg" style="left:936px;width:82px;color:#c8cace;padding-right:7px">上一页</div>
<div class="a pg" style="left:1028px;width:50px;background:#3d7afd;border-color:#3d7afd;color:#fff;font-weight:700">1</div>
<div class="a pg" style="left:1088px;width:50px;color:#333;font-weight:700">2</div>
<div class="a pg" style="left:1148px;width:82px;color:#444;padding-left:7px">下一页</div>
<div class="a" style="left:1259px;top:845px;font-size:13px;line-height:18px;color:#555">前往</div>
<div class="a pg" style="left:1289px;width:46px;color:#555;font-weight:400">1</div>
<div class="a" style="left:1338px;top:845px;font-size:13px;line-height:18px;color:#555">页</div>
<div id="hdr" class="a"></div>
<div class="a" style="left:217px;top:0;width:126px;height:52px;background:#2761e0"></div>
<div class="a" style="left:0;top:52px;width:1900px;height:1px;background:#1c62d6"></div>
<div class="a" style="left:217px;top:52px;width:126px;height:1px;background:#1552d6"></div>
<svg class="a" style="left:5px;top:3px" width="40" height="40" viewBox="0 0 40 40">
<path fill="#fff" d="M6.4 22.3 L13.4 15.9 L15 17 Q18.6 19.8 22.5 17.4 L24.5 15 L32.7 15 L32.7 17.6 L25.2 18.2 L25.9 24 L29.5 27.3 L31.4 35 L28.2 35 L25.9 29.5 Q21 26 17.3 29.3 L15.7 33.8 L12 33.8 L13.6 26.8 L16.6 23.6 L13.4 20.2 L8.6 24.8 Z"/>
<circle cx="18.6" cy="12" r="6" fill="#fff" stroke="#3d7afd" stroke-width="1"/>
<circle cx="28.6" cy="8.4" r="2.2" fill="none" stroke="#b8cdfd" stroke-width="0.6"/>
</svg>
<div class="a nt" style="left:57px;top:13px">有人云控制台</div>
<div class="a" style="left:167px;top:15px;width:20px;height:2px;background:#fff"></div>
<div class="a" style="left:167px;top:21px;width:20px;height:2px;background:#fff"></div>
<div class="a" style="left:167px;top:27px;width:20px;height:2px;background:#fff"></div>
<svg class="a" style="left:230px;top:6px" width="40" height="40" viewBox="0 0 40 40" fill="none" stroke="#fff" stroke-width="2" stroke-linejoin="round">
<path d="M13.2 23.6 A4.8 4.8 0 0 1 13.6 14 A5.8 5.8 0 0 1 25 14 A4.8 4.8 0 0 1 25.4 23.6 Z"/>
<circle cx="17.5" cy="24.1" r="2.6" fill="#2761e0"/>
</svg>
<div class="a nt" style="left:276px;top:13px;font-weight:700">云组态</div>
<svg class="a" style="left:360px;top:8px" width="32" height="32" viewBox="0 0 32 32" fill="none" stroke="#fff" stroke-width="2" stroke-linejoin="round" stroke-linecap="round">
<rect x="6.1" y="5.9" width="17.8" height="14" rx="1.2"/>
<path d="M15 20.5 V23.8 M10.6 24 H19.4"/>
<path d="M10.5 14.2 L13.6 11.3 L16.2 13.3 L19.3 10.7"/>
</svg>
<div class="a nt" style="left:403px;top:13px">云监测</div>
<svg class="a" style="left:488px;top:8px" width="32" height="32" viewBox="0 0 32 32" fill="none" stroke="#fff" stroke-width="2" stroke-linejoin="round" stroke-linecap="round">
<path d="M6.2 5 H18.5 L21.8 9.5 V22.9 H6.2 Z"/>
<path d="M17.9 11.6 V10.2 H10.3 V18.3 H11.6"/>
<path d="M14 14.9 H18 M14 18 H18" stroke-width="1.8"/>
</svg>
<div class="a nt" style="left:528px;top:13px">物联卡</div>
<svg class="a" style="left:612px;top:8px" width="32" height="32" viewBox="0 0 32 32" fill="none" stroke="#fff" stroke-width="2" stroke-linejoin="round" stroke-linecap="round">
<path d="M21.9 24.1 H8 Q6.1 24.1 6.1 22 V7 Q6.1 5 8 5 H20 Q21.9 5 21.9 7 Z"/>
<path d="M21.9 15 H25.9 V24.1 H21.9"/>
<path d="M9.6 11.6 H18.4 M9.6 16.5 H16.6" stroke-width="1.4"/>
</svg>
<div class="a nt" style="left:655px;top:13px">工单</div>
<svg class="a" style="left:722px;top:8px" width="32" height="32" viewBox="0 0 32 32" fill="none" stroke="#fff" stroke-width="2" stroke-linejoin="round" stroke-linecap="round">
<path d="M9.2 5.9 H22.9 L24.8 12.8 A2.95 2.95 0 0 1 18.9 12.8 A3 3 0 0 1 12.9 12.8 A2.85 2.85 0 0 1 7.2 12.8 Z"/>
<path d="M9.2 18.2 V24.1 H22.9 V18.2"/>
</svg>
<div class="a nt" style="left:765px;top:13px">商城</div>
<div class="a" style="left:1421px;top:16px;width:16px;height:16px;background:#fff"></div>
<svg class="a" style="left:1421px;top:16px" width="16" height="16" viewBox="0 0 16 16" fill="none" stroke="#3d7afd" stroke-width="0.8">
<circle cx="7.9" cy="7.9" r="5.6"/>
<path d="M6.5 2.5 Q4.8 8 6.5 13.3 M9.3 2.5 Q11 8 9.3 13.3 M3 6 L6 8 M12.8 6 L10 8"/>
</svg>
<div class="a rt" style="left:1447px;top:14px">English</div>
<i class="caret" style="left:1499px;top:20px;border-left-width:6px;border-right-width:6px;border-top:7px solid #fff"></i>
<div class="a rt" style="left:1534px;top:14px">日志服务</div>
<i class="caret" style="left:1595px;top:20px;border-left-width:6px;border-right-width:6px;border-top:7px solid #fff"></i>
<div class="a rt" style="left:1629px;top:14px">用户权限</div>
<i class="caret" style="left:1691px;top:20px;border-left-width:6px;border-right-width:6px;border-top:7px solid #fff"></i>
<div class="a" style="left:1725px;top:15px;width:115px;height:15px;background:#7ea5fb;border-radius:4px"></div>
<svg class="a" style="left:1850px;top:0" width="50" height="50" viewBox="0 0 50 50">
<defs><clipPath id="av"><circle cx="27" cy="23.8" r="19.9"/></clipPath></defs>
<circle cx="27" cy="23.8" r="19.9" fill="#a3cfd8"/>
<g clip-path="url(#av)">
<path d="M17 44 Q19 38.5 25 37.8 H29 Q35 38.5 37.5 44 Z" fill="#6d6673"/>
<path d="M24.3 37.5 L27 43.5 L29.7 37.5 Z" fill="#f4f4f4"/>
<rect x="25" y="33" width="4" height="5" fill="#f6c394"/>
<ellipse cx="27" cy="25" rx="10" ry="11" fill="#f9cc9b"/>
<ellipse cx="17" cy="27" rx="1.6" ry="2.2" fill="#f6c394"/>
<ellipse cx="37.5" cy="27" rx="1.6" ry="2.2" fill="#f6c394"/>
<path d="M16.5 26.5 Q15.5 12 27 12 Q38.5 12 37.5 26.5 L36 20 Q30 20.5 18.5 20 Z" fill="#c49150"/>
<circle cx="22.6" cy="26.6" r="0.9" fill="#4a3a30"/>
<circle cx="31.8" cy="26.6" r="0.9" fill="#4a3a30"/>
<path d="M25.5 33 Q27 33.8 28.5 33" stroke="#e9a587" stroke-width="0.6" fill="none"/>
</g>
</svg>

<div id="side" class="a"></div>
<div class="a" style="left:0;top:233px;width:197px;height:200px;background:#00131f"></div>
<div class="a" style="left:0;top:233px;width:197px;height:50px;background:#002a4e"></div>
<svg class="a" style="left:10px;top:65px" width="32" height="32" viewBox="0 0 32 32" fill="none" stroke-width="1.5" stroke-linejoin="round">
<path stroke="#fff" d="M7.8 17.4 L16 8.5 L24.2 17.4 H21.1 V21 Q21.1 22.9 19.2 22.9 H12.8 Q10.9 22.9 10.9 21 V17.4 Z"/>
<path stroke="#3e7bf8" stroke-width="1.8" d="M13.1 19.8 H18.9"/>
</svg>
<svg class="a" style="left:10px;top:125px" width="32" height="32" viewBox="0 0 32 32" fill="none" stroke-width="1.5" stroke-linejoin="round">
<rect stroke="#fff" x="8.4" y="8.5" width="15.2" height="10.9" rx="1.3"/>
<path stroke="#fff" stroke-width="1.3" d="M12.2 22.5 H19.8"/>
<path stroke="#3e7bf8" d="M10.9 15.3 L13.6 12.5 L18.4 15.3 L21.3 12.5"/>
</svg>
<svg class="a" style="left:10px;top:187px" width="32" height="32" viewBox="0 0 32 32" fill="none" stroke-width="1.5" stroke-linejoin="round">
<path stroke="#fff" d="M16 10 A6.9 6.9 0 1 0 22.9 16.9"/>
<path stroke="#3e7bf8" stroke-width="1.8" d="M17.4 15.1 V8.7 A5.9 5.9 0 0 1 23.3 15.1 Z"/>
</svg>
<svg class="a" style="left:10px;top:447px" width="32" height="32" viewBox="0 0 32 32" fill="none" stroke-width="1.5" stroke-linejoin="round">
<path stroke="#fff" d="M10.5 22 V14.2 A5.5 5.5 0 0 1 21.5 14.2 V22 M8.9 22.5 H23.1"/>
<path stroke="#3e7bf8" stroke-width="2" d="M16 11.3 V16.7 M16 18.6 V19.8"/>
</svg>
<svg class="a" style="left:10px;top:507px" width="32" height="32" viewBox="0 0 32 32" fill="none" stroke-width="1.5" stroke-linejoin="round">
<rect stroke="#fff" x="9.6" y="8.7" width="12.9" height="14.6" rx="2"/>
<path stroke="#3e7bf8" d="M12 14.2 H20 M12 18.4 H18"/>
</svg>
<svg class="a" style="left:10px;top:567px" width="32" height="32" viewBox="0 0 32 32" fill="none" stroke-width="1.5" stroke-linejoin="round">
<rect stroke="#fff" x="10.75" y="9.85" width="4.1" height="4.1" rx="1"/>
<rect stroke="#fff" x="10.75" y="17.15" width="4.1" height="4.1" rx="1"/>
<rect stroke="#fff" x="18.05" y="17.15" width="4.1" height="4.1" rx="1"/>
<path stroke="#3e7bf8" d="M20.2 8.6 L23.2 11.6 L20.2 14.6 L17.2 11.6 Z"/>
</svg>
<div class="a si" style="left:57px;top:72px">快速入门</div>
<div class="a si" style="left:57px;top:132px">监控大屏</div>
<div class="a si" style="left:57px;top:194px">设备管理</div>
<i class="caret" style="left:164px;top:200px;border-left-width:5.5px;border-right-width:5.5px;border-top:none;border-bottom:6px solid #fff"></i>
<div class="a si" style="left:67px;top:249px;color:#fff">设备列表</div>
<div class="a si" style="left:67px;top:299px">添加设备</div>
<div class="a si" style="left:67px;top:349px">设备模板</div>
<div class="a si" style="left:67px;top:399px">项目分组</div>
<div class="a si" style="left:57px;top:454px">报警管理</div>
<i class="caret" style="left:164px;top:462px;border-left-width:5.5px;border-right-width:5.5px;border-top:6px solid #8a929b"></i>
<div class="a si" style="left:57px;top:514px">数据报表</div>
<i class="caret" style="left:164px;top:522px;border-left-width:5.5px;border-right-width:5.5px;border-top:6px solid #8a929b"></i>
<div class="a si" style="left:57px;top:574px">扩展功能</div>
<i class="caret" style="left:164px;top:582px;border-left-width:5.5px;border-right-width:5.5px;border-top:6px solid #8a929b"></i>
<div class="a si" style="left:17px;top:848px;font-size:13px;color:#fff">10:38:00</div>
<div class="a si" style="left:17px;top:872px;font-size:13px;color:#fff">2020-03-27</div>

<div class="a" style="left:1571px;top:54px;width:329px;height:123px;border-radius:8px;background:rgba(25,135,168,0.82)"></div>
<div class="a" style="left:1693px;top:105px;width:155px;height:30px;border-radius:6px;background:rgba(255,255,255,0.2)"></div>
<div class="a" style="left:1704px;top:135px;width:141px;height:22px;border-radius:6px;background:rgba(255,255,255,0.22)"></div>
<svg class="a" style="left:1584px;top:103px" width="26" height="26" viewBox="0 0 26 26">
<circle cx="13" cy="13" r="12" fill="#67c23a"/>
<path d="M7.5 13 L11.5 17 L19 9" fill="none" stroke="#3d82c4" stroke-width="2.2" stroke-linecap="round" stroke-linejoin="round"/>
</svg>
<svg class="a" style="left:1869px;top:73px" width="16" height="16" viewBox="0 0 16 16">
<path d="M3 3 L13 13 M13 3 L3 13" stroke="#fff" stroke-width="1.6"/>
</svg>
<div class="a rt" style="left:1622px;top:80px;font-size:14px;font-weight:700">状态：上线</div>
<div class="a rt" style="left:1622px;top:108px;font-size:14px;font-weight:700">设备名称：</div>
<div class="a rt" style="left:1622px;top:138px;font-size:14px;font-weight:700">设备编号：0.</div>

</body></html>
